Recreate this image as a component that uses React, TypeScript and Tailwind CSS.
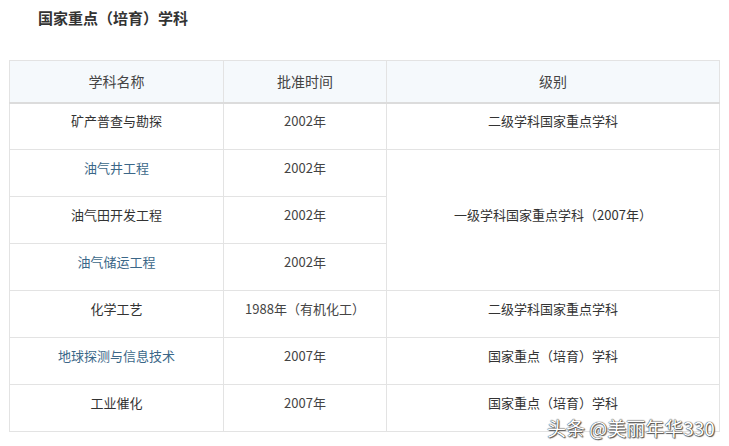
import React from "react";

const font = { fontFamily: '"Noto Sans CJK SC", "Noto Sans", sans-serif' };

type Row = { name: string; link?: boolean; date: string; level?: string; span?: number };

const rows: Row[] = [
  { name: "矿产普查与勘探", date: "2002年", level: "二级学科国家重点学科" },
  { name: "油气井工程", link: true, date: "2002年", level: "一级学科国家重点学科（2007年）", span: 3 },
  { name: "油气田开发工程", date: "2002年" },
  { name: "油气储运工程", link: true, date: "2002年" },
  { name: "化学工艺", date: "1988年（有机化工）", level: "二级学科国家重点学科" },
  { name: "地球探测与信息技术", link: true, date: "2007年", level: "国家重点（培育）学科" },
  { name: "工业催化", date: "2007年", level: "国家重点（培育）学科" },
];

export default function App() {
  return (
    <div className="relative w-[729px] h-[446px] bg-white overflow-hidden text-[#333]" style={font}>
      <div className="pl-[38px] pt-[8px] h-[60px] text-[15px] font-bold text-[#333] leading-[20px]">
        国家重点（培育）学科
      </div>
      <div className="pl-[9px]">
        <table className="w-[710px] border-collapse table-fixed text-[13px]">
          <colgroup>
            <col className="w-[214px]" />
            <col className="w-[163px]" />
            <col className="w-[333px]" />
          </colgroup>
          <thead>
            <tr className="h-[42px] bg-[#f5f9fc] text-[14px] text-[#444]">
              <th className="font-normal border border-[#e3e3e3] border-b-2 border-b-[#dcdcdc]">学科名称</th>
              <th className="font-normal border border-[#e3e3e3] border-b-2 border-b-[#dcdcdc]">批准时间</th>
              <th className="font-normal border border-[#e3e3e3] border-b-2 border-b-[#dcdcdc]">级别</th>
            </tr>
          </thead>
          <tbody>
            {rows.map((r, i) => (
              <tr key={i} className="h-[47px]">
                <td className={`text-center pb-[11px] border border-[#e3e3e3] ${r.link ? "text-[#3b6788]" : "text-[#333]"}`}>{r.name}</td>
                <td className="text-center pb-[11px] border border-[#e3e3e3] text-[#444]">{r.date}</td>
                {r.level !== undefined && (
                  <td rowSpan={r.span ?? 1} className="text-center pb-[11px] border border-[#e3e3e3] text-[#333]">
                    {r.level}
                  </td>
                )}
              </tr>
            ))}
          </tbody>
        </table>
      </div>
      <div className="absolute left-[547px] top-[415px] whitespace-nowrap text-[19px] leading-[26px] text-white [text-shadow:0_0_1px_#333,0_0_1px_#333,1px_1px_1px_#555]">
        头条 @美丽年华330
      </div>
    </div>
  );
}
